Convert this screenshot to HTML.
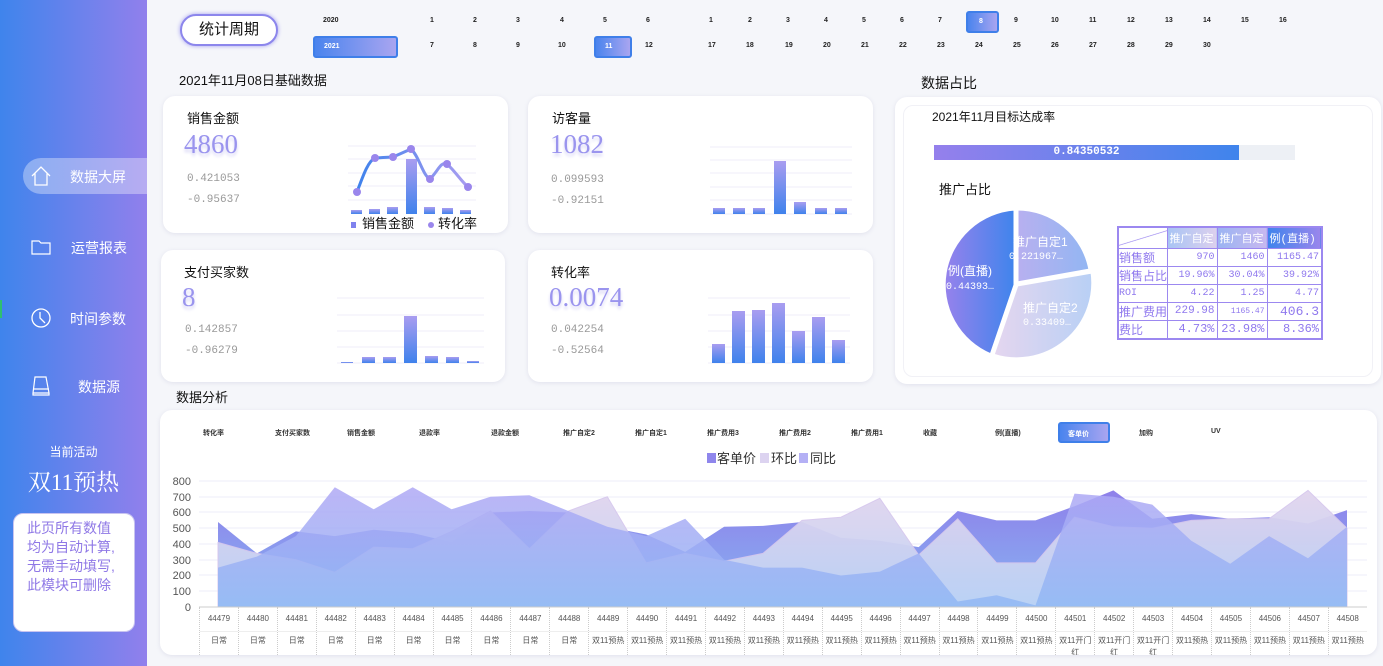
<!DOCTYPE html>
<html><head><meta charset="utf-8">
<style>
*{margin:0;padding:0;box-sizing:border-box}
body{width:1383px;height:666px;overflow:hidden;background:#f5f6fa;font-family:"Liberation Sans","Noto Sans CJK SC",sans-serif;position:relative;color:#111}
.abs{position:absolute}
.side{left:0;top:0;width:147px;height:666px;background:linear-gradient(90deg,#3f84ec,#9180ec)}
.nav{position:absolute;left:0;width:147px;height:36px;color:#fff;font-size:14px}
.nav span{position:absolute;top:9px}
.card{position:absolute;background:#fff;border-radius:12px;box-shadow:0 1px 4px rgba(180,180,210,.3)}
.ct{position:absolute;font-size:13px;color:#111}
.big{position:absolute;font-family:"Liberation Serif",serif;font-size:27px;color:#9a94ee;text-shadow:0 3px 3px #d6d4f5}
.sm{position:absolute;font-family:"Liberation Mono",monospace;font-size:11px;color:#999}
.t8{position:absolute;font-size:7px;font-weight:bold;color:#222}
.btn{position:absolute;background:linear-gradient(90deg,#4a84ee,#a9a5f0);border:2px solid #3f7fe9;border-radius:3px;color:#fff;font-size:7px;font-weight:bold}
.tab{position:absolute;top:428px;font-size:7px;font-weight:bold;color:#333}
table{border-collapse:collapse}
td{border:1px solid #9c88f0;font-size:10px;color:#8f78ee;text-align:right;font-family:"Liberation Mono","Noto Sans CJK SC",monospace;height:18px;padding:0 2px;white-space:nowrap;overflow:hidden}
td.l{text-align:left;padding:0}
</style></head><body>
<div class="abs side"></div>
<div class="nav" style="top:158px"><div style="position:absolute;left:23px;top:0;width:124px;height:36px;background:rgba(255,255,255,.35);border-radius:18px 0 0 18px"></div>
<svg class="abs" style="left:30px;top:7px" width="22" height="22" viewBox="0 0 22 22" fill="none" stroke="#fff" stroke-width="1.3"><path d="M2 11 L11 2 L20 11 M5 8.5 V20 H17 V8.5"/></svg><span style="left:70px">数据大屏</span></div>
<div class="nav" style="top:229px"><svg class="abs" style="left:31px;top:10px" width="20" height="16" viewBox="0 0 20 16" fill="none" stroke="#fff" stroke-width="1.2"><path d="M1 2 H8 L10 4 H19 V15 H1 Z"/></svg><span style="left:71px">运营报表</span></div>
<div class="nav" style="top:300px"><svg class="abs" style="left:30px;top:7px" width="22" height="22" viewBox="0 0 22 22" fill="none" stroke="#fff" stroke-width="1.3"><circle cx="11" cy="11" r="9"/><path d="M10 5 V11 L15 16"/></svg><span style="left:70px">时间参数</span></div>
<div class="nav" style="top:368px"><svg class="abs" style="left:31px;top:7px" width="20" height="22" viewBox="0 0 20 22" fill="none" stroke="#fff" stroke-width="1.2"><path d="M4 2 H15 L18 18 H2 Z M2 14 H18 M2 18 V20 H18 V18"/></svg><span style="left:78px">数据源</span></div>
<div class="abs" style="left:0;width:147px;top:443px;text-align:center;color:#fff;font-size:12px">当前活动</div>
<div class="abs" style="left:0;width:147px;top:464px;text-align:center;color:#fff;font-size:23px;font-family:'Liberation Serif','Noto Serif CJK SC',serif">双11预热</div>
<div class="abs" style="left:13px;top:513px;width:122px;height:119px;background:#fff;border-radius:10px;border:1px solid #c8c4f0;padding:5px 0 0 13px;color:#8f78e6;font-size:14px;line-height:19px">此页所有数值<br>均为自动计算,<br>无需手动填写,<br>此模块可删除</div>
<div class="abs" style="left:0;top:300px;width:2px;height:18px;background:#2fbf70"></div>

<div class="abs" style="left:180px;top:14px;width:98px;height:32px;border:2px solid #8c86ec;border-radius:16px;background:#fff;box-shadow:0 0 4px #a39ef0;text-align:center;line-height:28px;font-size:15px">统计周期</div>
<div class="t8" style="left:323px;top:17px">2020</div>
<div class="btn" style="left:313px;top:36px;width:85px;height:22px;padding:5px 0 0 9px">2021</div>
<div class="t8" style="left:430px;top:17px">1</div><div class="t8" style="left:473px;top:17px">2</div><div class="t8" style="left:516px;top:17px">3</div><div class="t8" style="left:560px;top:17px">4</div><div class="t8" style="left:603px;top:17px">5</div><div class="t8" style="left:646px;top:17px">6</div>
<div class="t8" style="left:430px;top:42px">7</div><div class="t8" style="left:473px;top:42px">8</div><div class="t8" style="left:516px;top:42px">9</div><div class="t8" style="left:558px;top:42px">10</div>
<div class="btn" style="left:594px;top:36px;width:38px;height:22px;padding:5px 0 0 9px">11</div><div class="t8" style="left:645px;top:42px">12</div>
<div class="t8" style="left:709px;top:17px">1</div><div class="t8" style="left:748px;top:17px">2</div><div class="t8" style="left:786px;top:17px">3</div><div class="t8" style="left:824px;top:17px">4</div><div class="t8" style="left:862px;top:17px">5</div><div class="t8" style="left:900px;top:17px">6</div><div class="t8" style="left:938px;top:17px">7</div>
<div class="btn" style="left:966px;top:11px;width:33px;height:22px;padding:5px 0 0 11px">8</div>
<div class="t8" style="left:1014px;top:17px">9</div><div class="t8" style="left:1051px;top:17px">10</div><div class="t8" style="left:1089px;top:17px">11</div><div class="t8" style="left:1127px;top:17px">12</div><div class="t8" style="left:1165px;top:17px">13</div><div class="t8" style="left:1203px;top:17px">14</div><div class="t8" style="left:1241px;top:17px">15</div><div class="t8" style="left:1279px;top:17px">16</div>
<div class="t8" style="left:708px;top:42px">17</div><div class="t8" style="left:746px;top:42px">18</div><div class="t8" style="left:785px;top:42px">19</div><div class="t8" style="left:823px;top:42px">20</div><div class="t8" style="left:861px;top:42px">21</div><div class="t8" style="left:899px;top:42px">22</div><div class="t8" style="left:937px;top:42px">23</div><div class="t8" style="left:975px;top:42px">24</div><div class="t8" style="left:1013px;top:42px">25</div><div class="t8" style="left:1051px;top:42px">26</div><div class="t8" style="left:1089px;top:42px">27</div><div class="t8" style="left:1127px;top:42px">28</div><div class="t8" style="left:1165px;top:42px">29</div><div class="t8" style="left:1203px;top:42px">30</div>

<div class="abs" style="left:179px;top:70px;font-size:13px">2021年11月08日基础数据</div>
<div class="abs" style="left:921px;top:73px;font-size:14px">数据占比</div>

<svg width="0" height="0" style="position:absolute"><defs>
<linearGradient id="bg" x1="0" y1="0" x2="0" y2="1"><stop offset="0" stop-color="#a99df0"/><stop offset="1" stop-color="#3f82ec"/></linearGradient>
<linearGradient id="lg" x1="0" y1="0" x2="1" y2="0"><stop offset="0" stop-color="#3f82ec"/><stop offset="1" stop-color="#a99df0"/></linearGradient>
</defs></svg>

<div class="card" style="left:163px;top:96px;width:345px;height:137px">
<div class="ct" style="left:24px;top:12px">销售金额</div>
<div class="big" style="left:21px;top:33px">4860</div>
<div class="sm" style="left:24px;top:77px">0.421053</div><div class="sm" style="left:24px;top:98px">-0.95637</div>
<svg class="abs" style="left:0;top:0" width="345" height="137">
<g stroke="#efeefa"><line x1="185" y1="50" x2="313" y2="50"/><line x1="185" y1="63" x2="313" y2="63"/><line x1="185" y1="77" x2="313" y2="77"/><line x1="185" y1="90" x2="313" y2="90"/><line x1="185" y1="104" x2="313" y2="104"/></g>
<g fill="url(#bg)"><rect x="188" y="114" width="11" height="4"/><rect x="206" y="113" width="11" height="5"/><rect x="224" y="111" width="11" height="7"/><rect x="243" y="63" width="11" height="55"/><rect x="261" y="111" width="11" height="7"/><rect x="279" y="112" width="11" height="6"/><rect x="297" y="114" width="11" height="4"/></g>
<path d="M194 96 C200 80,205 65,212 62 L230 61 L248 53 C256 60,260 80,267 83 C275 75,278 65,284 68 C292 75,298 85,305 91" fill="none" stroke="url(#lg)" stroke-width="3"/>
<g fill="#9a86ec"><circle cx="194" cy="96" r="4"/><circle cx="212" cy="62" r="4"/><circle cx="230" cy="61" r="4"/><circle cx="248" cy="53" r="4"/><circle cx="267" cy="83" r="4"/><circle cx="284" cy="68" r="4"/><circle cx="305" cy="91" r="4"/></g>
<rect x="188" y="126" width="5" height="6" fill="#7f82ee"/><text x="199" y="132" font-size="13" fill="#111">销售金额</text>
<circle cx="268" cy="129" r="3" fill="#9a86ec"/><text x="275" y="132" font-size="13" fill="#111">转化率</text>
</svg></div>

<div class="card" style="left:528px;top:96px;width:345px;height:137px">
<div class="ct" style="left:24px;top:12px">访客量</div>
<div class="big" style="left:22px;top:33px">1082</div>
<div class="sm" style="left:23px;top:78px">0.099593</div><div class="sm" style="left:23px;top:99px">-0.92151</div>
<svg class="abs" style="left:0;top:0" width="345" height="137">
<g stroke="#efeefa"><line x1="182" y1="51" x2="324" y2="51"/><line x1="182" y1="64" x2="324" y2="64"/><line x1="182" y1="77" x2="324" y2="77"/><line x1="182" y1="91" x2="324" y2="91"/><line x1="182" y1="104" x2="324" y2="104"/><line x1="182" y1="118" x2="324" y2="118"/></g>
<g fill="url(#bg)"><rect x="185" y="112" width="12" height="6"/><rect x="205" y="112" width="12" height="6"/><rect x="225" y="112" width="12" height="6"/><rect x="246" y="65" width="12" height="53"/><rect x="266" y="106" width="12" height="12"/><rect x="287" y="112" width="12" height="6"/><rect x="307" y="112" width="12" height="6"/></g>
</svg></div>

<div class="card" style="left:161px;top:250px;width:344px;height:132px">
<div class="ct" style="left:23px;top:12px">支付买家数</div>
<div class="big" style="left:21px;top:32px">8</div>
<div class="sm" style="left:24px;top:74px">0.142857</div><div class="sm" style="left:24px;top:95px">-0.96279</div>
<svg class="abs" style="left:0;top:0" width="344" height="132">
<g stroke="#efeefa"><line x1="176" y1="48" x2="323" y2="48"/><line x1="176" y1="65" x2="323" y2="65"/><line x1="176" y1="81" x2="323" y2="81"/><line x1="176" y1="97" x2="323" y2="97"/><line x1="176" y1="113" x2="323" y2="113"/></g>
<g fill="url(#bg)"><rect x="180" y="112" width="12" height="1"/><rect x="201" y="107" width="13" height="6"/><rect x="222" y="107" width="13" height="6"/><rect x="243" y="66" width="13" height="47"/><rect x="264" y="106" width="13" height="7"/><rect x="285" y="107" width="13" height="6"/><rect x="306" y="111" width="12" height="2"/></g>
</svg></div>

<div class="card" style="left:528px;top:250px;width:345px;height:132px">
<div class="ct" style="left:23px;top:12px">转化率</div>
<div class="big" style="left:21px;top:32px">0.0074</div>
<div class="sm" style="left:23px;top:74px">0.042254</div><div class="sm" style="left:23px;top:95px">-0.52564</div>
<svg class="abs" style="left:0;top:0" width="345" height="132">
<g stroke="#efeefa"><line x1="180" y1="48" x2="322" y2="48"/><line x1="180" y1="65" x2="322" y2="65"/><line x1="180" y1="81" x2="322" y2="81"/><line x1="180" y1="97" x2="322" y2="97"/><line x1="180" y1="113" x2="322" y2="113"/></g>
<g fill="url(#bg)"><rect x="184" y="94" width="13" height="19"/><rect x="204" y="61" width="13" height="52"/><rect x="224" y="60" width="13" height="53"/><rect x="244" y="53" width="13" height="60"/><rect x="264" y="81" width="13" height="32"/><rect x="284" y="67" width="13" height="46"/><rect x="304" y="90" width="13" height="23"/></g>
</svg></div>

<div class="card" style="left:895px;top:97px;width:486px;height:287px">
<div class="abs" style="left:8px;top:8px;width:470px;height:272px;border:1px solid #f1f1f6;border-radius:10px"></div>
<div class="ct" style="left:37px;top:11px;font-size:12px">2021年11月目标达成率</div>
<div class="abs" style="left:39px;top:48px;width:361px;height:15px;background:#edf0f5"></div>
<div class="abs" style="left:39px;top:48px;width:305px;height:15px;background:linear-gradient(90deg,#9580ec,#3f84ec);color:#fff;font-size:11px;font-weight:bold;text-align:center;line-height:15px;font-family:'Liberation Mono',monospace">0.84350532</div>
<div class="ct" style="left:44px;top:82px">推广占比</div>
<svg class="abs" style="left:0;top:0" width="486" height="287">
<defs>
<linearGradient id="p1" x1="0" x2="1"><stop offset="0" stop-color="#b8b0f0"/><stop offset="1" stop-color="#92b6f2"/></linearGradient>
<linearGradient id="p2" x1="0" x2="1"><stop offset="0" stop-color="#e5d6ef"/><stop offset="1" stop-color="#b8d0f5"/></linearGradient>
<linearGradient id="p3" x1="0" x2="1"><stop offset="0" stop-color="#9782ec"/><stop offset="1" stop-color="#3f84ec"/></linearGradient>
</defs>
<g stroke="#fff" stroke-width="3">
<path d="M122 186 L122 112 A74 74 0 0 1 195 173 Z" fill="url(#p1)"/>
<path d="M122 188 L197 175 A76 76 0 0 1 98 258 Z" fill="url(#p2)"/>
<path d="M120 188 L96 258 A76 76 0 0 1 120 112 Z" fill="url(#p3)"/>
</g>
<g fill="#fff" font-size="12"><text x="118" y="149">推广自定1</text><text x="114" y="162" font-size="10" font-family="Liberation Mono">0.221967…</text>
<text x="53" y="178">例(直播)</text><text x="51" y="192" font-size="10" font-family="Liberation Mono">0.44393…</text>
<text x="128" y="215">推广自定2</text><text x="128" y="228" font-size="10" font-family="Liberation Mono">0.33409…</text></g>
</svg>
<table class="abs" style="left:222px;top:129px;width:204px;border:2px solid #9c88f0;table-layout:fixed">
<colgroup><col style="width:49px"><col style="width:50px"><col style="width:50px"><col style="width:55px"></colgroup>
<tr style="height:21px"><td style="background:linear-gradient(163deg,#fff 48%,#9c88f0 50%,#fff 52%)"></td><td style="background:linear-gradient(90deg,#a8c4f4,#dcd0ee);color:#fff;text-align:left;font-size:11px">推广自定</td><td style="background:linear-gradient(90deg,#9ab4f2,#c8b8f0);color:#fff;text-align:left;font-size:11px">推广自定</td><td style="background:linear-gradient(90deg,#3f84ec,#9a86ec);color:#fff;text-align:left;font-size:11px">例(直播)</td></tr>
<tr><td class="l" style="font-size:12px">销售额</td><td>970</td><td>1460</td><td>1165.47</td></tr>
<tr><td class="l" style="font-size:12px">销售占比</td><td>19.96%</td><td>30.04%</td><td>39.92%</td></tr>
<tr><td class="l">ROI</td><td>4.22</td><td>1.25</td><td>4.77</td></tr>
<tr><td class="l" style="font-size:12px">推广费用</td><td style="font-size:11px">229.98</td><td style="font-size:8px">1165.47</td><td style="font-size:13px">406.3</td></tr>
<tr><td class="l" style="font-size:12px">费比</td><td style="font-size:12px">4.73%</td><td style="font-size:12px">23.98%</td><td style="font-size:12px">8.36%</td></tr>
</table>
</div>

<div class="abs" style="left:176px;top:387px;font-size:13px">数据分析</div>
<div class="card" style="left:160px;top:410px;width:1217px;height:245px"></div>
<div class="tab" style="left:203px">转化率</div><div class="tab" style="left:275px">支付买家数</div><div class="tab" style="left:347px">销售金额</div><div class="tab" style="left:419px">退款率</div><div class="tab" style="left:491px">退款金额</div><div class="tab" style="left:563px">推广自定2</div><div class="tab" style="left:635px">推广自定1</div><div class="tab" style="left:707px">推广费用3</div><div class="tab" style="left:779px">推广费用2</div><div class="tab" style="left:851px">推广费用1</div><div class="tab" style="left:923px">收藏</div><div class="tab" style="left:995px">例(直播)</div>
<div class="btn" style="left:1058px;top:422px;width:52px;height:21px;padding:5px 0 0 8px;border-radius:3px">客单价</div>
<div class="tab" style="left:1139px">加购</div><div class="tab" style="left:1211px">UV</div>

<svg class="abs" style="left:0;top:0" width="1383" height="666">
<defs>
<linearGradient id="a1" x1="0" y1="0" x2="0" y2="1"><stop offset="0" stop-color="#8f80ea"/><stop offset="1" stop-color="#86b4f2"/></linearGradient>
<linearGradient id="a2" x1="0" y1="0" x2="0" y2="1"><stop offset="0" stop-color="#e2d4ee"/><stop offset="1" stop-color="#bcd4f6"/></linearGradient>
<linearGradient id="a3" x1="0" y1="0" x2="0" y2="1"><stop offset="0" stop-color="#b0a8f5"/><stop offset="1" stop-color="#90b8f4"/></linearGradient>
</defs>
<rect x="707" y="453" width="9" height="10" fill="#8f86ec"/><text x="717" y="463" font-size="13" fill="#333">客单价</text>
<rect x="760" y="453" width="9" height="10" fill="#dcd3f0"/><text x="771" y="463" font-size="13" fill="#333">环比</text>
<rect x="799" y="453" width="9" height="10" fill="#b4b0f5"/><text x="810" y="463" font-size="13" fill="#333">同比</text>
<g stroke="#eeedf8"><line x1="199" y1="481" x2="1367" y2="481"/><line x1="199" y1="497" x2="1367" y2="497"/><line x1="199" y1="512" x2="1367" y2="512"/><line x1="199" y1="528" x2="1367" y2="528"/><line x1="199" y1="544" x2="1367" y2="544"/><line x1="199" y1="560" x2="1367" y2="560"/><line x1="199" y1="575" x2="1367" y2="575"/><line x1="199" y1="591" x2="1367" y2="591"/></g>
<g font-size="11" fill="#555" text-anchor="end"><text x="191" y="485">800</text><text x="191" y="501">700</text><text x="191" y="516">600</text><text x="191" y="532">500</text><text x="191" y="548">400</text><text x="191" y="564">300</text><text x="191" y="579">200</text><text x="191" y="595">100</text><text x="191" y="611">0</text></g>
<polygon fill="url(#a1)" points="218,607 218,522 256.9,553.4 295.9,531.4 334.8,536.1 373.7,529.8 412.7,533 451.6,542.4 490.5,512.5 529.4,511 568.4,512.5 607.3,526.7 646.2,534.5 685.2,551.9 724.1,526.7 763,525.9 802,522 840.9,537.7 879.8,540.8 918.7,547.1 957.7,511 996.6,520.4 1035.5,520.4 1074.5,506.2 1113.4,490.4 1152.3,518.8 1191.3,514.1 1230.2,518.8 1269.1,517.2 1308,523.5 1347,510.1 1347,607"/>
<polygon fill="url(#a2)" opacity="0.95" stroke="#d6c8ee" points="218,607 218,542.4 256.9,553.4 295.9,559.7 334.8,572.3 373.7,547.1 412.7,548.7 451.6,531.4 490.5,511 529.4,548.7 568.4,511 607.3,496.7 646.2,562.9 685.2,553.4 724.1,561.3 763,553.4 802,520.4 840.9,517.2 879.8,498.3 918.7,555 957.7,518.8 996.6,562.9 1035.5,562.9 1074.5,517.2 1113.4,526.7 1152.3,528.2 1191.3,520.4 1230.2,518.8 1269.1,518.8 1308,490.4 1347,528.2 1347,607"/>
<polygon fill="url(#a3)" opacity="0.85" points="218,607 218,567.6 256.9,556.6 295.9,536.1 334.8,487.3 373.7,509.3 412.7,487.3 451.6,509.3 490.5,496.7 529.4,495.2 568.4,511 607.3,526.7 646.2,536.1 685.2,518.8 724.1,559.7 763,567.6 802,567.6 840.9,575.5 879.8,571.6 918.7,553.4 957.7,601.5 996.6,595.2 1035.5,605.4 1074.5,493.6 1113.4,496.7 1152.3,504.6 1191.3,540.8 1230.2,563.7 1269.1,536.1 1308,558.2 1347,526.7 1347,607"/>
<line x1="199" y1="607" x2="1367" y2="607" stroke="#ccc"/>
</svg>
<div class="abs" style="left:199px;top:607px;width:1168px;height:48px;display:flex;font-size:8px;color:#555;text-align:center">
<script>
var n=["日常","日常","日常","日常","日常","日常","日常","日常","日常","日常","双11预热","双11预热","双11预热","双11预热","双11预热","双11预热","双11预热","双11预热","双11预热","双11预热","双11预热","双11预热","双11开门红","双11开门红","双11开门红","双11预热","双11预热","双11预热","双11预热","双11预热"];
for(var i=0;i<30;i++)document.write('<div style="width:38.93px;border-left:1px dotted #ccc;height:48px;overflow:hidden"><div style="height:25px;padding-top:7px;border-bottom:1px solid #eee">'+(44479+i)+'</div><div style="padding-top:3px;line-height:12px;word-break:break-all">'+n[i]+'</div></div>');
</script>
</div>
</body></html>
